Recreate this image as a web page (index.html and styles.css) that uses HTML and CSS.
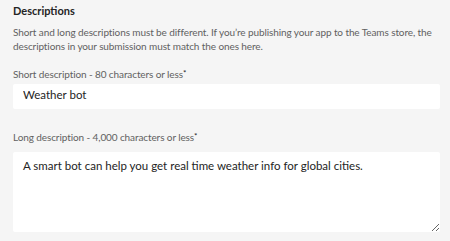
FILE: index.html
```html
<!DOCTYPE html>
<html>
<head>
<meta charset="utf-8">
<link rel="stylesheet" href="styles.css">
</head>
<body>
<section class="panel">
  <h2 class="title">Descriptions</h2>
  <p class="intro">Short and long descriptions must be different. If you’re publishing your app to the Teams store, the descriptions in your submission must match the ones here.</p>
  <label class="label">Short description - 80 characters or less<span class="req">*</span></label>
  <input class="field" type="text" value="Weather bot" readonly>
  <label class="label label-long">Long description - 4,000 characters or less<span class="req">*</span></label>
  <textarea class="area" readonly>A smart bot can help you get real time weather info for global cities.</textarea>
</section>
</body>
</html>
```

FILE: styles.css
```css
html, body {
  margin: 0;
  padding: 0;
  background: #f5f5f5;
}
body {
  font-family: Lato, "Noto Sans", sans-serif;
  color: #242424;
}
.panel {
  display: flex;
  flex-direction: column;
  padding: 4px 10px 0 13px;
}
.title {
  margin: 0;
  font-size: 11px;
  font-weight: 700;
  line-height: 14px;
}
.intro {
  margin: 7px 0 0;
  font-size: 10px;
  line-height: 14px;
  letter-spacing: -0.1px;
  color: #616161;
}
.label {
  margin-top: 13px;
  font-size: 10px;
  line-height: 14px;
  letter-spacing: -0.1px;
  color: #616161;
}
.req {
  vertical-align: 2px;
  font-size: 8px;
  color: #242424;
}
.label-long {
  margin-top: 20px;
}
.field {
  margin-top: 3px;
  height: 25px;
  box-sizing: border-box;
  border: none;
  border-radius: 2px;
  background: #fff;
  padding: 0 10px 4px;
  font-family: inherit;
  font-size: 11.5px;
  color: #242424;
  outline: none;
}
.area {
  margin-top: 8px;
  height: 80px;
  box-sizing: border-box;
  border: none;
  border-radius: 2px;
  background: #fff;
  padding: 6px 10px;
  font-family: inherit;
  font-size: 11.5px;
  line-height: 16px;
  color: #242424;
  outline: none;
  resize: vertical;
}
```
